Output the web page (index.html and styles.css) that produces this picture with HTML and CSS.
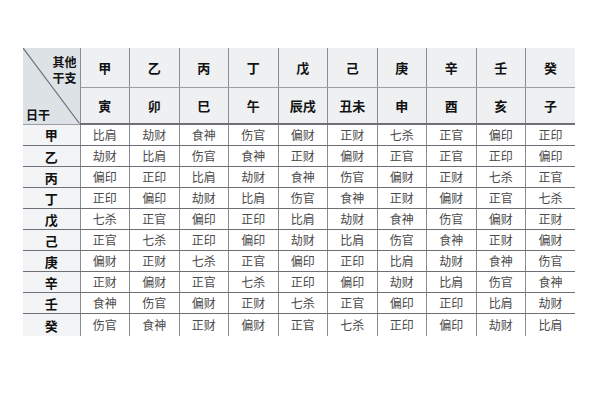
FILE: index.html
```html
<!DOCTYPE html>
<html lang="zh">
<head>
<meta charset="utf-8">
<link rel="stylesheet" href="styles.css">
</head>
<body>
<table class="tg">
  <colgroup>
    <col class="c-first">
    <col span="10" class="c-data">
  </colgroup>
  <thead>
    <tr class="h1">
      <th class="corner" rowspan="2">
        <svg class="diag" viewBox="0 0 57 76" preserveAspectRatio="none"><line x1="0" y1="0" x2="57" y2="76"/></svg>
        <span class="top">其他<br>干支</span>
        <span class="bot">日干</span>
      </th>
      <th>甲</th><th>乙</th><th>丙</th><th>丁</th><th>戊</th><th>己</th><th>庚</th><th>辛</th><th>壬</th><th>癸</th>
    </tr>
    <tr class="h2">
      <th>寅</th><th>卯</th><th>巳</th><th>午</th><th>辰戌</th><th>丑未</th><th>申</th><th>酉</th><th>亥</th><th>子</th>
    </tr>
  </thead>
  <tbody>
    <tr><th>甲</th><td>比肩</td><td>劫财</td><td>食神</td><td>伤官</td><td>偏财</td><td>正财</td><td>七杀</td><td>正官</td><td>偏印</td><td>正印</td></tr>
    <tr><th>乙</th><td>劫财</td><td>比肩</td><td>伤官</td><td>食神</td><td>正财</td><td>偏财</td><td>正官</td><td>正官</td><td>正印</td><td>偏印</td></tr>
    <tr><th>丙</th><td>偏印</td><td>正印</td><td>比肩</td><td>劫财</td><td>食神</td><td>伤官</td><td>偏财</td><td>正财</td><td>七杀</td><td>正官</td></tr>
    <tr><th>丁</th><td>正印</td><td>偏印</td><td>劫财</td><td>比肩</td><td>伤官</td><td>食神</td><td>正财</td><td>偏财</td><td>正官</td><td>七杀</td></tr>
    <tr><th>戊</th><td>七杀</td><td>正官</td><td>偏印</td><td>正印</td><td>比肩</td><td>劫财</td><td>食神</td><td>伤官</td><td>偏财</td><td>正财</td></tr>
    <tr><th>己</th><td>正官</td><td>七杀</td><td>正印</td><td>偏印</td><td>劫财</td><td>比肩</td><td>伤官</td><td>食神</td><td>正财</td><td>偏财</td></tr>
    <tr><th>庚</th><td>偏财</td><td>正财</td><td>七杀</td><td>正官</td><td>偏印</td><td>正印</td><td>比肩</td><td>劫财</td><td>食神</td><td>伤官</td></tr>
    <tr><th>辛</th><td>正财</td><td>偏财</td><td>正官</td><td>七杀</td><td>正印</td><td>偏印</td><td>劫财</td><td>比肩</td><td>伤官</td><td>食神</td></tr>
    <tr><th>壬</th><td>食神</td><td>伤官</td><td>偏财</td><td>正财</td><td>七杀</td><td>正官</td><td>偏印</td><td>正印</td><td>比肩</td><td>劫财</td></tr>
    <tr><th>癸</th><td>伤官</td><td>食神</td><td>正财</td><td>偏财</td><td>正官</td><td>七杀</td><td>正印</td><td>偏印</td><td>劫财</td><td>比肩</td></tr>
  </tbody>
</table>
</body>
</html>
```

FILE: styles.css
```css
html, body {
  margin: 0;
  padding: 0;
  background: #ffffff;
}

body {
  padding: 48px 0 0 23px;
  font-family: "Noto Sans CJK SC", "Noto Sans", sans-serif;
}

.tg {
  border-collapse: collapse;
  table-layout: fixed;
  width: 552px;
}

.c-first { width: 57px; }
.c-data { width: 49.5px; }

.tg th, .tg td {
  padding: 0;
  text-align: center;
  vertical-align: middle;
  line-height: 1;
}

.tg thead th {
  background: #eef0f2;
  color: #111;
  font-weight: 700;
  font-size: 13px;
  border-left: 1px solid #8a8d92;
}

.tg thead tr.h1 th {
  height: 39px;
  border-bottom: 1px solid #9a9da2;
}

.tg thead tr.h2 th {
  height: 35px;
  border-bottom: 2px solid #6e7075;
}

.tg thead th.corner {
  position: relative;
  background: #dde2e7;
  border-left: none;
  border-bottom: 2px solid #6e7075;
  border-right: 1px solid #8a8d92;
}

.diag {
  position: absolute;
  left: 0;
  top: 0;
  width: 100%;
  height: 100%;
}

.diag line {
  stroke: #6b6e73;
  stroke-width: 1.2;
  vector-effect: non-scaling-stroke;
}

.corner .top {
  position: absolute;
  right: 3px;
  top: 6px;
  font-size: 12px;
  line-height: 16px;
  text-align: right;
  color: #111;
}

.corner .bot {
  position: absolute;
  left: 3px;
  bottom: 2px;
  font-size: 12px;
  line-height: 14px;
  color: #111;
}

.tg tbody th {
  background: #f3f4f5;
  color: #111;
  font-weight: 700;
  font-size: 13px;
  height: 20px;
  border-bottom: 1px solid #6e7075;
}

.tg tbody td {
  color: #4a4a4a;
  font-size: 12px;
  height: 20px;
  border-left: 1px solid #8a8d92;
  border-bottom: 1px solid #6e7075;
}

.tg tbody tr:last-child th,
.tg tbody tr:last-child td {
  border-bottom: none;
  height: 22px;
}
```
